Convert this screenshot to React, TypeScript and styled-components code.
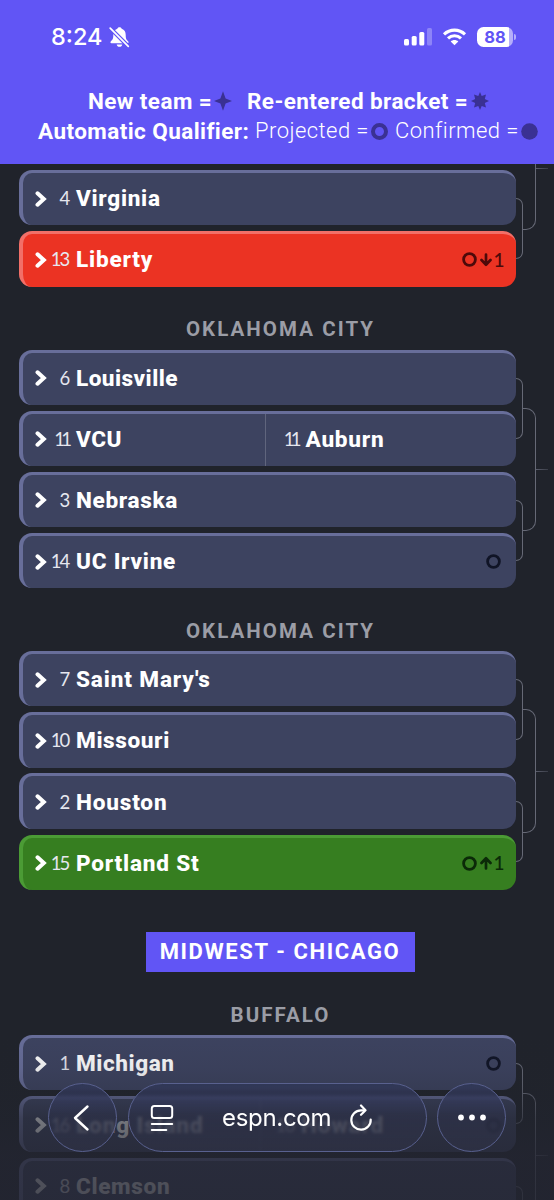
import React from 'react';
import styled, { createGlobalStyle } from 'styled-components';

const Global = createGlobalStyle`
  *, *::before, *::after { box-sizing: border-box; }
  html, body { margin: 0; background: #20232b; }
  body { width: 554px; height: 1200px; overflow: hidden; font-family: Roboto, "Liberation Sans", sans-serif; }
`;

const tones = {
  slate: { face: '#3d4360', edge: '#686e9a', mark: '#101426' },
  red: { face: '#eb3323', edge: '#f26f68', mark: '#4d0a0a' },
  green: { face: '#367e20', edge: '#4b9b35', mark: '#0b2a08' },
};
type Tone = keyof typeof tones;

const Phone = styled.div`
  position: relative;
  display: flex;
  flex-direction: column;
  width: 554px;
  height: 1200px;
  overflow: hidden;
  background: #20232b;
`;

const Header = styled.header`
  flex: none;
  height: 163.5px;
  background: #6155f5;
  color: #fff;
`;

const StatusBar = styled.div`
  display: flex;
  align-items: center;
  height: 74px;
  padding: 0 38px 0 51px;
  svg { display: block; flex: none; }
`;

const Clock = styled.span`
  width: 58px;
  font: 550 23.5px/30px Inter, sans-serif;
  letter-spacing: 0;
  white-space: nowrap;
`;

const Spacer = styled.div`
  flex: 1;
`;

const SignalIcon = styled.svg`
  margin-right: 10.5px;
`;

const Battery = styled.div`
  display: flex;
  align-items: center;
  justify-content: center;
  width: 36px;
  height: 20px;
  margin-left: 10px;
  border-radius: 6.5px;
  background: linear-gradient(90deg, #fff 31.5px, #b5aefa 31.5px);
  color: #6155f5;
  font: 700 16.5px/20px Inter, sans-serif;
`;

const BatteryTip = styled.div`
  width: 2px;
  height: 6px;
  margin-left: 1px;
  border-radius: 0 2px 2px 0;
  background: #b5aefa;
`;

const Legend = styled.div<{ $left: number }>`
  display: flex;
  align-items: center;
  height: 30px;
  margin-top: ${p => (p.$left > 50 ? 12 : 0)}px;
  padding-left: ${p => p.$left}px;
  white-space: nowrap;
  svg { display: block; flex: none; }
`;

const LegendText = styled.span<{ $width: number; $bold?: boolean; $gap?: number }>`
  flex: none;
  width: ${p => p.$width}px;
  margin-left: ${p => p.$gap ?? 0}px;
  font-size: ${p => (p.$bold ? 22.5 : 22)}px;
  line-height: 30px;
  font-weight: ${p => (p.$bold ? 700 : 300)};
  letter-spacing: ${p => (p.$bold ? 0.42 : 0.45)}px;
`;

const Viewport = styled.main`
  flex: 1;
  min-height: 0;
  overflow: hidden;
`;

const Scrolled = styled.div`
  margin-top: -115.5px;
  padding-left: 19px;
`;

const SiteTitle = styled.h3`
  display: flex;
  align-items: flex-end;
  justify-content: center;
  width: 523px;
  height: 63px;
  margin: 0;
  padding-bottom: 8.5px;
  color: #9b9da6;
  font-size: 20.5px;
  font-weight: 700;
  line-height: 24px;
  letter-spacing: 2.05px;
`;

const RegionWrap = styled.div`
  display: flex;
  justify-content: center;
  width: 522px;
  padding-top: 42.5px;
`;

const Region = styled.h2`
  width: 269px;
  height: 40px;
  margin: 0;
  background: #6155f5;
  color: #fff;
  font-size: 22px;
  font-weight: 700;
  line-height: 40px;
  letter-spacing: 1.6px;
  text-align: center;
  white-space: nowrap;
`;

const Bracket = styled.section`
  display: flex;
  height: 238.6px;
`;

const Rows = styled.div`
  display: flex;
  flex-direction: column;
  gap: 5.95px;
  width: 496.5px;
`;

const Row = styled.div<{ $tone: Tone }>`
  display: flex;
  align-items: center;
  flex: none;
  height: 55.2px;
  padding: 0 14.5px 0 12px;
  border: 0 solid ${p => tones[p.$tone].edge};
  border-width: 3px 0 0 4px;
  border-radius: 13px;
  background: ${p => tones[p.$tone].face};
  color: #fff;
  svg { display: block; flex: none; }
`;

const Seed = styled.span<{ $tight?: boolean }>`
  flex: none;
  width: ${p => (p.$tight ? 19.5 : 21.5)}px;
  height: 26px;
  margin-left: ${p => (p.$tight ? 2 : 0)}px;
  margin-right: 7.5px;
  font: 400 18.5px/24px Lato, sans-serif;
  letter-spacing: ${p => (p.$tight ? -3.6 : -1.8)}px;
  text-align: right;
  white-space: nowrap;
  color: #e6e7ef;
`;

const Name = styled.span<{ $track?: number }>`
  flex: none;
  height: 32px;
  font: 800 22.6px/31px Roboto, sans-serif;
  letter-spacing: ${p => p.$track ?? 0.55}px;
  white-space: nowrap;
`;

const Half = styled.div`
  display: flex;
  align-items: center;
  align-self: stretch;
  width: 230px;
`;

const SecondHalf = styled(Half)`
  padding-left: 10.5px;
  border-left: 1px solid #60657d;
`;

const Marks = styled.div<{ $tone: Tone }>`
  display: flex;
  align-items: center;
  margin-left: auto;
  padding-bottom: 1px;
  color: ${p => tones[p.$tone].mark};
`;

const ArrowIcon = styled.svg`
  margin-left: 3px;
`;

const Shift = styled.span`
  margin-left: 1px;
  margin-right: -3.5px;
  font: 500 19px/24px Lato, sans-serif;
`;

const Pairs = styled.div`
  display: flex;
  flex-direction: column;
  gap: 61.3px;
  width: 7.5px;
  padding-top: 28px;
`;

const Joint = styled.div<{ $height: number }>`
  flex: none;
  height: ${p => p.$height}px;
  border: 1px solid #666976;
  border-left: 0;
  border-radius: 0 10px 10px 0;
`;

const Outer = styled.div`
  width: 13px;
  padding-top: 58px;
`;

const Stub = styled.div`
  width: 12px;
  height: 1px;
  margin-top: 119.5px;
  background: linear-gradient(90deg, #5a5d6b, #3a3d48);
`;

const Fade = styled.div`
  position: absolute;
  left: 0;
  right: 0;
  bottom: 0;
  height: 170px;
  background: linear-gradient(180deg, rgba(33, 36, 46, 0) 0%, rgba(33, 36, 46, 0.1) 22%, rgba(33, 36, 46, 0.22) 34%, rgba(33, 36, 46, 0.62) 52%, rgba(35, 37, 49, 0.78) 74%, rgba(35, 37, 49, 0.82) 100%);
`;

const BrowserBar = styled.nav`
  position: absolute;
  left: 48px;
  right: 48px;
  bottom: 48px;
  display: flex;
  justify-content: space-between;
  height: 69px;
`;

const Glass = styled.div<{ $width: number; $pad?: number }>`
  display: flex;
  align-items: center;
  justify-content: ${p => (p.$pad ? 'flex-start' : 'center')};
  width: ${p => p.$width}px;
  height: 69px;
  padding-left: ${p => p.$pad ?? 0}px;
  border: 1.5px solid #59618f;
  border-radius: 35px;
  background: linear-gradient(180deg, rgba(47, 53, 86, 0.75) 0%, rgba(52, 58, 91, 0.8) 22%, rgba(45, 49, 74, 0.6) 45%, rgba(47, 50, 70, 0.65) 100%);
  backdrop-filter: blur(1.5px);
  color: #fff;
  svg { display: block; flex: none; }
`;

const BackIcon = styled.svg`
  margin-right: 4px;
`;

const Address = styled.span`
  width: 110px;
  margin: 0 17px 0 48.5px;
  font: 400 24px/30px Inter, sans-serif;
  letter-spacing: -0.3px;
  white-space: nowrap;
`;

const Chevron = () => (
  <svg width="12" height="19" viewBox="0 0 12 19">
    <path d="M2.5 3.3 L8.800 9 L2.5 14.700" fill="none" stroke="currentColor" strokeWidth="4" strokeLinecap="round" strokeLinejoin="miter" />
  </svg>
);

const Ring = () => (
  <svg width="15" height="15">
    <circle cx="7.500" cy="7.500" r="5.900" fill="none" stroke="currentColor" strokeWidth="2.800" />
  </svg>
);

const Arrow = ({ up }: { up?: boolean }) => (
  <ArrowIcon width="12" height="14" viewBox="0 0 12 14">
    <path
      d={up ? 'M6 12.500V2.500M1.500 7L6 2.300L10.500 7' : 'M6 1.500V11.500M1.500 7L6 11.700L10.500 7'}
      fill="none" stroke="currentColor" strokeWidth="2.700" strokeLinecap="round" strokeLinejoin="round"
    />
  </ArrowIcon>
);

type Team = { seed: number; name: string; track?: number };
type Entry = Team & { tone?: Tone; ring?: boolean; move?: 'up' | 'down'; alt?: Team };

const TeamRow = ({ e }: { e: Entry }) => {
  const tone = e.tone ?? 'slate';
  const lead = (
    <>
      <Chevron />
      <Seed $tight={e.seed === 11}>{e.seed}</Seed>
      <Name $track={e.track}>{e.name}</Name>
    </>
  );
  return (
    <Row $tone={tone}>
      {e.alt ? <Half>{lead}</Half> : lead}
      {e.alt && (
        <SecondHalf>
          <Seed $tight={e.alt.seed === 11}>{e.alt.seed}</Seed>
          <Name $track={e.alt.track}>{e.alt.name}</Name>
        </SecondHalf>
      )}
      {e.ring && (
        <Marks $tone={tone}>
          <Ring />
          {e.move && <Arrow up={e.move === 'up'} />}
          {e.move && <Shift>1</Shift>}
        </Marks>
      )}
    </Row>
  );
};

const Pod = ({ entries, blank = 0 }: { entries: Entry[]; blank?: number }) => (
  <Bracket>
    <Rows>
      {Array.from({ length: blank }, (_, i) => <Row key={i} $tone="slate" />)}
      {entries.map(e => <TeamRow key={e.name} e={e} />)}
    </Rows>
    <Pairs>
      <Joint $height={61} />
      <Joint $height={61} />
    </Pairs>
    <Outer>
      <Joint $height={123.500} />
    </Outer>
    <Stub />
  </Bracket>
);

const first: Entry[] = [
  { seed: 4, name: 'Virginia', track: 0.7 },
  { seed: 13, name: 'Liberty', tone: 'red', ring: true, move: 'down', track: 0.8 },
];
const second: Entry[] = [
  { seed: 6, name: 'Louisville', track: 0.45 },
  { seed: 11, name: 'VCU', track: 0.5, alt: { seed: 11, name: 'Auburn', track: 0.75 } },
  { seed: 3, name: 'Nebraska', track: 0.65 },
  { seed: 14, name: 'UC Irvine', ring: true, track: 0.75 },
];
const third: Entry[] = [
  { seed: 7, name: "Saint Mary's", track: 0.85 },
  { seed: 10, name: 'Missouri', track: 0.6 },
  { seed: 2, name: 'Houston', track: 0.8 },
  { seed: 15, name: 'Portland St', tone: 'green', ring: true, move: 'up', track: 0.8 },
];
const fourth: Entry[] = [
  { seed: 1, name: 'Michigan', ring: true, track: 0.55 },
  { seed: 16, name: 'Long Island', ring: true, track: 0.85, alt: { seed: 16, name: 'Howard', track: 0.85 } },
  { seed: 8, name: 'Clemson', track: 0.65 },
];

const ink = '#3a3193';

export default function App() {
  return (
    <Phone>
      <Global />
      <Header>
        <StatusBar>
          <Clock>8:24</Clock>
          <svg width="21" height="22" viewBox="0 0 21 22">
            <path d="M10.500 1.200c-1.200 0-2 .7-2.200 1.600C5.500 3.800 4.300 6 4.300 9c0 4-1 5-2.400 6.300-.8.800-.6 2 .6 2h16c1.200 0 1.400-1.200.6-2C17.700 14 16.700 13 16.700 9c0-3-1.200-5.200-4-6.200-.2-.9-1-1.600-2.200-1.600zM7.700 18.400c.3 1.500 1.300 2.400 2.800 2.400s2.500-.9 2.800-2.400z" fill="#fff" />
            <path d="M1.200 2.200L19.500 20.500" stroke="#6155f5" strokeWidth="4" />
            <path d="M1.200 2.200L19.300 20.300" stroke="#fff" strokeWidth="1.700" strokeLinecap="round" />
          </svg>
          <Spacer />
          <SignalIcon width="28" height="18" viewBox="0 0 28 18">
            <rect x="0" y="11" width="5" height="6.500" rx="1.500" fill="#fff" />
            <rect x="7.700" y="8" width="5" height="9.500" rx="1.500" fill="#fff" />
            <rect x="15.300" y="4" width="5" height="13.500" rx="1.500" fill="#fff" />
            <rect x="23" y="0" width="5" height="17.500" rx="1.500" fill="#8d84f8" />
          </SignalIcon>
          <svg width="25" height="18" viewBox="0 0 25 18">
            <path d="M2 6.300C8 .7 17 .7 23 6.300M6 10.300c3.800-3.500 9.200-3.500 13 0" fill="none" stroke="#fff" strokeWidth="3.100" />
            <path d="M8.700 13.400c2.200-2 5.400-2 7.600 0L12.500 17.200z" fill="#fff" />
          </svg>
          <Battery>88</Battery>
          <BatteryTip />
        </StatusBar>
        <Legend $left={88}>
          <LegendText $bold $width={126}>New team =</LegendText>
          <svg width="18" height="20" viewBox="0 0 18 20">
            <path d="M9 .3L11.600 7.400L18 10L11.600 12.600L9 19.700L6.400 12.600L0 10L6.400 7.400z" fill={ink} />
          </svg>
          <LegendText $bold $width={224} $gap={15}>Re-entered bracket =</LegendText>
          <svg width="18" height="18" viewBox="-9 -9 18 18">
            <path d="M0-9L1.700-4.900L6-6.400L4.800-1.900L9 0L4.800 1.900L6 6.400L1.700 4.900L0 9L-1.700 4.900L-6 6.400L-4.800 1.900L-9 0L-4.800-1.900L-6-6.400L-1.700-4.900z" fill={ink} />
            <circle r="4.800" fill={ink} />
          </svg>
        </Legend>
        <Legend $left={38}>
          <LegendText $bold $width={217}>Automatic Qualifier:</LegendText>
          <LegendText $width={116}>Projected =</LegendText>
          <svg width="17" height="17" viewBox="0 0 17 17"><circle cx="8.500" cy="8.500" r="6.500" fill="none" stroke={ink} strokeWidth="4" /></svg>
          <LegendText $width={126} $gap={7}>Confirmed =</LegendText>
          <svg width="17" height="17" viewBox="0 0 17 17"><circle cx="8.500" cy="8.500" r="8.300" fill={ink} /></svg>
        </Legend>
      </Header>
      <Viewport>
        <Scrolled>
          <Pod entries={first} blank={2} />
          <SiteTitle>OKLAHOMA CITY</SiteTitle>
          <Pod entries={second} />
          <SiteTitle>OKLAHOMA CITY</SiteTitle>
          <Pod entries={third} />
          <RegionWrap><Region>MIDWEST - CHICAGO</Region></RegionWrap>
          <SiteTitle>BUFFALO</SiteTitle>
          <Pod entries={fourth} />
        </Scrolled>
      </Viewport>
      <Fade />
      <BrowserBar>
        <Glass $width={69}>
          <BackIcon width="18" height="28" viewBox="0 0 18 28">
            <path d="M15.500 2.500L3 14L15.500 25.500" fill="none" stroke="#fff" strokeWidth="2.400" strokeLinecap="round" strokeLinejoin="round" />
          </BackIcon>
        </Glass>
        <Glass $width={299} $pad={21}>
          <svg width="24" height="28" viewBox="0 0 24 28">
            <rect x="1.800" y="2" width="20.400" height="12" rx="2.500" fill="none" stroke="#fff" strokeWidth="2" />
            <path d="M1.800 20h20.400M1.800 26h14.500" stroke="#fff" strokeWidth="2" strokeLinecap="round" />
          </svg>
          <Address>espn.com</Address>
          <svg width="24" height="28" viewBox="0 0 24 28">
            <path d="M14.500 6.300H12A9.700 9.700 0 1 0 21.700 15.500" fill="none" stroke="#fff" strokeWidth="2.200" strokeLinecap="round" />
            <path d="M12 1.500L16.500 6.200L12 10.800" fill="none" stroke="#fff" strokeWidth="2.200" strokeLinecap="round" strokeLinejoin="round" />
          </svg>
        </Glass>
        <Glass $width={69}>
          <svg width="30" height="8" viewBox="0 0 30 8">
            <circle cx="4" cy="3.500" r="2.900" fill="#fff" />
            <circle cx="15" cy="3.500" r="2.900" fill="#fff" />
            <circle cx="26" cy="3.500" r="2.900" fill="#fff" />
          </svg>
        </Glass>
      </BrowserBar>
    </Phone>
  );
}
